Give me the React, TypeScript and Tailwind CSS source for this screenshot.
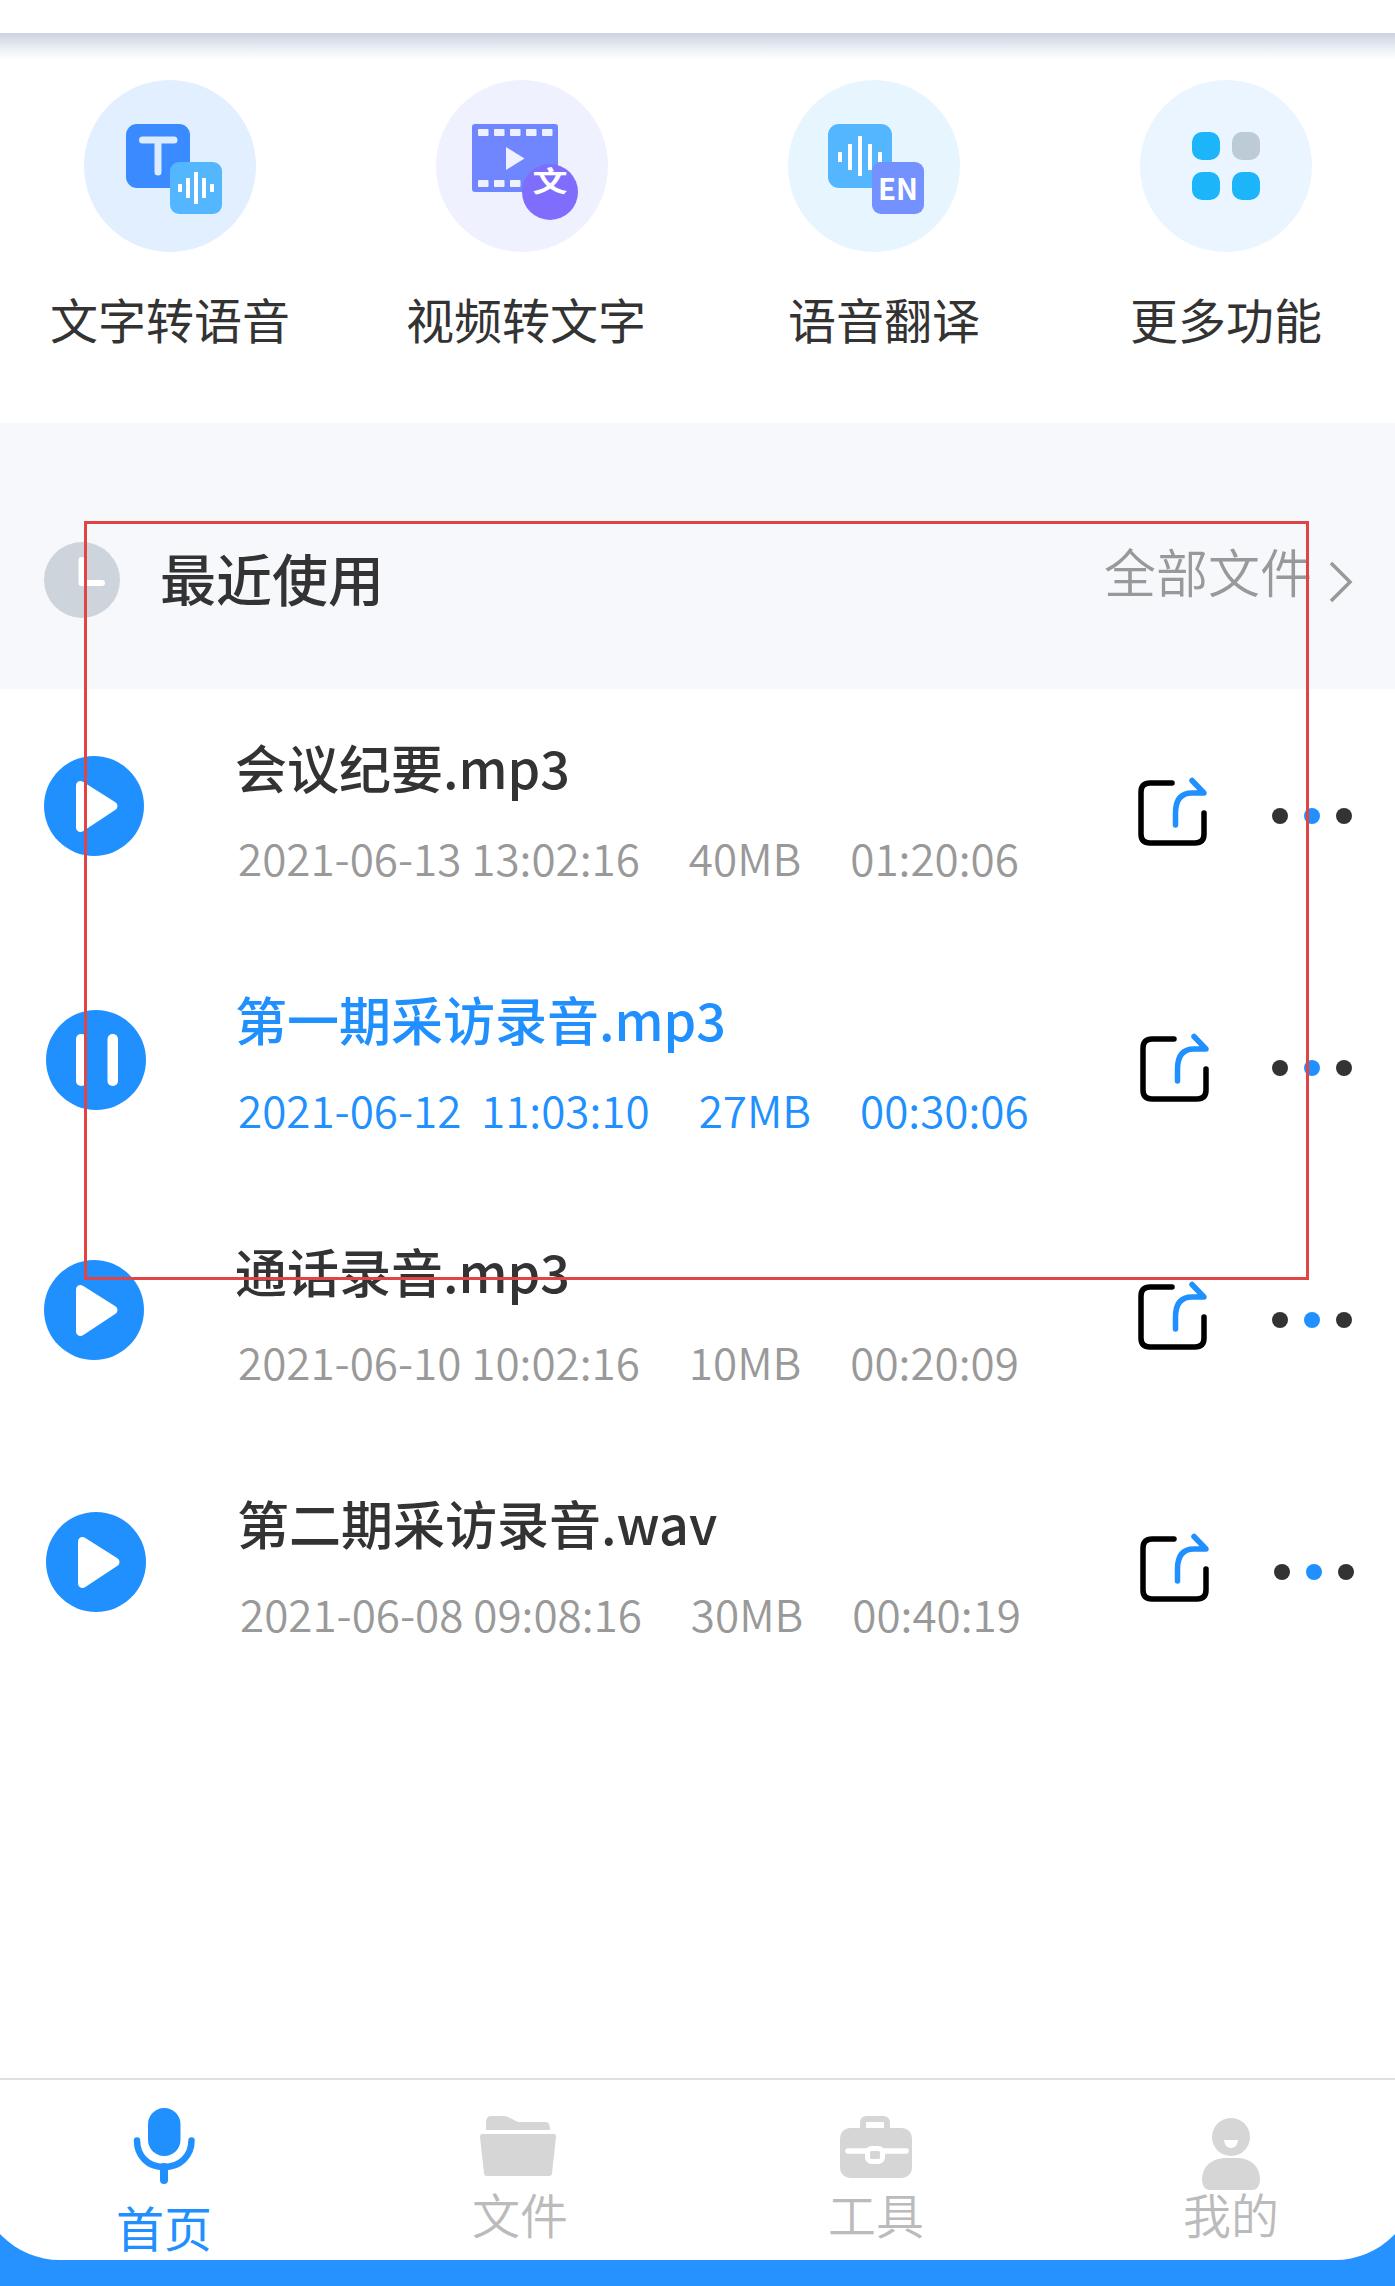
import type { ReactNode } from 'react';
import { clsx } from 'clsx';

interface Recording {
  name: string;
  date: string;
  size: string;
  duration: string;
  playing?: boolean;
  // the extra pixels some rows are shifted by
  rowClass: string;
  buttonClass: string;
  shareClass: string;
}

const recordings: Recording[] = [
  {
    name: '会议纪要.mp3',
    date: '2021-06-13 13:02:16',
    size: '40MB',
    duration: '01:20:06',
    rowClass: 'pl-[44px] pr-[43px]',
    buttonClass: 'mt-[67px] mr-[91px]',
    shareClass: 'mt-[88px] mr-[64px]',
  },
  {
    name: '第一期采访录音.mp3',
    date: '2021-06-12  11:03:10',
    size: '27MB',
    duration: '00:30:06',
    playing: true,
    rowClass: 'pl-[46px] pr-[43px]',
    buttonClass: 'mt-[69px] mr-[89px]',
    shareClass: 'mt-[92px] mr-[62px]',
  },
  {
    name: '通话录音.mp3',
    date: '2021-06-10 10:02:16',
    size: '10MB',
    duration: '00:20:09',
    rowClass: 'pl-[44px] pr-[43px]',
    buttonClass: 'mt-[67px] mr-[91px]',
    shareClass: 'mt-[88px] mr-[64px]',
  },
  {
    name: '第二期采访录音.wav',
    date: '2021-06-08 09:08:16',
    size: '30MB',
    duration: '00:40:19',
    rowClass: 'pl-[46px] pr-[41px]',
    buttonClass: 'mt-[67px] mr-[91px]',
    shareClass: 'mt-[88px] mr-[64px]',
  },
];

const TextToSpeechIcon = () => (
  <svg width="172" height="172" viewBox="0 0 172 172">
    <circle cx="86" cy="86" r="86" fill="#e2efff" />
    <rect x="42" y="44" width="64" height="64" rx="11" fill="#3a8bff" />
    <path d="M58.500 60H90M74 60V92" stroke="#dcebff" strokeWidth="7" strokeLinecap="round" fill="none" />
    <rect x="86" y="82" width="52" height="52" rx="9" fill="#54b6ff" />
    <path d="M96 104v8M104 98v20M112 92v32M120 98v20M128 104v8" stroke="#fff" strokeWidth="4" />
  </svg>
);

const VideoToTextIcon = () => (
  <svg width="172" height="172" viewBox="0 0 172 172">
    <circle cx="86" cy="86" r="86" fill="#eff1ff" />
    <rect x="36" y="44" width="86" height="68" rx="3" fill="#6f86ff" />
    {[42, 58, 74, 90, 106].map((x) => (
      <g key={x} fill="#eff1ff">
        <rect x={x} y="49" width="10.500" height="7" rx="1" />
        <rect x={x} y="100" width="10.500" height="7" rx="1" />
      </g>
    ))}
    <path d="M70 67L88.500 78.500L70 90Z" fill="#eff1ff" />
    <circle cx="114" cy="112" r="28" fill="#7f6dfd" />
    <text transform="translate(114 112) scale(1 .8)" fontSize="35" fontWeight="700" textAnchor="middle" fill="#fff">文</text>
  </svg>
);

const TranslateIcon = () => (
  <svg width="172" height="172" viewBox="0 0 172 172">
    <circle cx="86" cy="86" r="86" fill="#e7f5ff" />
    <rect x="40" y="44" width="64" height="64" rx="11" fill="#54b6ff" />
    <path d="M52 72v10M62 64v26M72 56v40M82 64v26M92 72v10" stroke="#fff" strokeWidth="4" />
    <rect x="84" y="82" width="52" height="52" rx="9" fill="#7391ff" />
    <text x="110" y="120" fontSize="30" fontWeight="700" textAnchor="middle" textLength="40" lengthAdjust="spacingAndGlyphs" fill="#fff">EN</text>
  </svg>
);

const MoreIcon = () => (
  <svg width="172" height="172" viewBox="0 0 172 172">
    <circle cx="86" cy="86" r="86" fill="#ebf5ff" />
    <g fill="#1db5f9">
      <rect x="52" y="52" width="28" height="28" rx="10" />
      <rect x="52" y="92" width="28" height="28" rx="10" />
      <rect x="92" y="92" width="28" height="28" rx="10" />
    </g>
    <rect x="92" y="52" width="28" height="28" rx="10" fill="#bccbd5" />
  </svg>
);

const PlayButton = ({ playing }: { playing?: boolean }) => (
  <svg width="100" height="100" viewBox="0 0 100 100">
    <circle cx="50" cy="50" r="50" fill="#2190ff" />
    {playing ? (
      <g fill="#fff">
        <rect x="30" y="24" width="10.500" height="52" rx="5" />
        <rect x="61.500" y="24" width="10.500" height="52" rx="5" />
      </g>
    ) : (
      <path d="M36.500 29.500L69 50L36.500 71.500Z" fill="#fff" stroke="#fff" strokeWidth="9" strokeLinejoin="round" />
    )}
  </svg>
);

const ShareIcon = () => (
  <svg width="70" height="70" viewBox="0 0 70 70" fill="none" strokeWidth="5.500">
    <path d="M34 6H12Q3 6 3 15V57Q3 66 12 66H57Q66 66 66 57V36" stroke="#000" strokeLinecap="round" />
    <path d="M37.500 48V36Q37.500 16 54 16H66L54 3.500" stroke="#2190ff" strokeLinecap="round" strokeLinejoin="round" />
  </svg>
);

const MicIcon = () => (
  <svg width="64" height="78" viewBox="0 0 64 78">
    <rect x="16" y="0" width="32.500" height="48" rx="16.200" fill="#2190ff" />
    <path d="M5 32.500C5 48 16 59 32 59S59.500 48 59.500 32.500" stroke="#2190ff" strokeWidth="6.500" strokeLinecap="round" fill="none" />
    <path d="M32 59V72" stroke="#2190ff" strokeWidth="8" strokeLinecap="round" />
  </svg>
);

const FolderIcon = () => (
  <svg width="76" height="60" viewBox="0 0 76 60" fill="#d6d6d6">
    <path d="M6 14V5Q7 0 11 0H24Q27 0 30 2L38 6H66Q70 6 70 14Z" />
    <path d="M2 18H74Q76 18 76 21L72 57Q72 60 69 60H7Q4 60 4 57L0 21Q0 18 2 18Z" />
  </svg>
);

const ToolboxIcon = () => (
  <svg width="72" height="62" viewBox="0 0 72 62">
    <path d="M23 14V7Q23 3 27 3H43Q47 3 47 7V14" fill="none" stroke="#d6d6d6" strokeWidth="6" />
    <rect x="0" y="12" width="72" height="50" rx="10" fill="#d6d6d6" />
    <path d="M8 35H66" stroke="#fff" strokeWidth="5.500" strokeLinecap="round" />
    <rect x="27.500" y="32.500" width="15" height="13" rx="4" fill="#d6d6d6" stroke="#fff" strokeWidth="5" />
  </svg>
);

const ProfileIcon = () => (
  <svg width="58" height="72" viewBox="0 0 58 72">
    <circle cx="29" cy="19" r="19" fill="#d6d6d6" />
    <path d="M22 22H36Q35 30 29 30T22 22Z" fill="#fff" />
    <path d="M22 40H37Q56 42 58 60Q58 72 50 72H8Q0 72 0 60Q2 42 22 40Z" fill="#d6d6d6" />
  </svg>
);

const Feature = ({ icon, label, labelClass }: { icon: ReactNode; label: string; labelClass?: string }) => (
  <button className="flex w-[352px] flex-col items-center">
    {icon}
    <span className={clsx('mt-[30px] text-5xl leading-[72px] text-[#333]', labelClass)}>{label}</span>
  </button>
);

const RecordingRow = ({ item }: { item: Recording }) => (
  <li className={clsx('flex h-[252px] items-start', item.rowClass)}>
    <button className={item.buttonClass}>
      <PlayButton playing={item.playing} />
    </button>
    <div className={clsx('flex-1 whitespace-pre', item.playing ? 'text-[#2190ff]' : 'text-[#333]')}>
      <h3 className="mt-10 text-[52px] leading-[76px] font-medium">{item.name}</h3>
      <p
        className={clsx(
          "mt-5 ml-[3px] flex gap-[49px] font-['Noto_Sans_CJK_SC_DemiLight','Noto_Sans_CJK_SC',sans-serif] text-[44px] leading-[64px] font-[350]",
          !item.playing && 'text-[#999]',
        )}
      >
        <span>{item.date}</span>
        <span>{item.size}</span>
        <span>{item.duration}</span>
      </p>
    </div>
    <button className={item.shareClass}>
      <ShareIcon />
    </button>
    <button className="mt-[119px] flex gap-4">
      <span className="size-4 rounded-full bg-[#333]" />
      <span className="size-4 rounded-full bg-[#2190ff]" />
      <span className="size-4 rounded-full bg-[#333]" />
    </button>
  </li>
);

const Tab = ({ icon, label, className }: { icon: ReactNode; label: string; className: string }) => (
  <button className={clsx('flex w-24 flex-col items-center', className)}>
    {icon}
    <span className="text-5xl leading-[72px]">{label}</span>
  </button>
);

export default function App() {
  return (
    <div className="relative h-[2286px] w-[1395px] overflow-hidden bg-[#2692ff] font-['Noto_Sans_CJK_SC',sans-serif]">
      <div className="-mx-[22px] flex h-[2260px] flex-col rounded-b-[82px] bg-white px-[22px]">
        <div className="mt-[33px] h-[27px] shrink-0 bg-linear-to-b from-[#c9d2de] via-[#e8ecf2] to-white" />

        <section className="flex h-[363px] shrink-0 pt-5">
          <div className="-ml-[6px] flex shrink-0">
            <Feature icon={<TextToSpeechIcon />} label="文字转语音" />
            <Feature icon={<VideoToTextIcon />} label="视频转文字" labelClass="pl-2" />
            <Feature icon={<TranslateIcon />} label="语音翻译" labelClass="pl-5" />
            <Feature icon={<MoreIcon />} label="更多功能" />
          </div>
        </section>

        <header className="flex h-[266px] shrink-0 items-start bg-[#f6f8fc] pr-[42px] pl-[44px]">
          <svg className="mt-[119px]" width="76" height="76" viewBox="0 0 76 76">
            <circle cx="38" cy="38" r="38" fill="#cdd4db" />
            <path d="M37.500 18V41H58" stroke="#fff" strokeWidth="6" strokeLinecap="round" strokeLinejoin="round" fill="none" />
          </svg>
          <h2 className="mt-[113px] ml-10 text-[56px] leading-[82px] font-medium text-[#333]">最近使用</h2>
          <a className="mt-[110px] ml-auto font-['Noto_Sans_CJK_SC_DemiLight','Noto_Sans_CJK_SC',sans-serif] text-[52px] leading-[76px] font-[350] text-[#999]">
            全部文件
          </a>
          <svg className="mt-[138px] ml-[17px]" width="24" height="42" viewBox="0 0 24 42">
            <path d="M2 2L21 21L2 40" fill="none" stroke="#999" strokeWidth="3.500" />
          </svg>
        </header>

        <ul className="shrink-0">
          {recordings.map((item) => (
            <RecordingRow key={item.name} item={item} />
          ))}
        </ul>

        <nav className="-mx-[22px] mt-auto flex h-[182px] shrink-0 items-start border-t-2 border-[#e0e0e0] px-[22px] font-['Noto_Sans_CJK_SC_DemiLight','Noto_Sans_CJK_SC',sans-serif] font-[350] text-[#bbb]">
          <Tab
            icon={<MicIcon />}
            label="首页"
            className="mt-7 ml-[116px] gap-1 font-['Noto_Sans_CJK_SC',sans-serif] font-normal text-[#2190ff]"
          />
          <Tab icon={<FolderIcon />} label="文件" className="mt-9 ml-[260px] gap-px [&>svg]:-ml-1" />
          <Tab icon={<ToolboxIcon />} label="工具" className="mt-9 ml-[260px] [&>span]:-mt-px" />
          <Tab icon={<ProfileIcon />} label="我的" className="mt-[38px] ml-[259px] [&>span]:-mt-[13px]" />
        </nav>
      </div>

      {/* selection frame drawn over the list */}
      <div className="pointer-events-none absolute top-[521px] left-[84px] h-[759px] w-[1225px] border-[3px] border-[#e04545]" />
    </div>
  );
}
